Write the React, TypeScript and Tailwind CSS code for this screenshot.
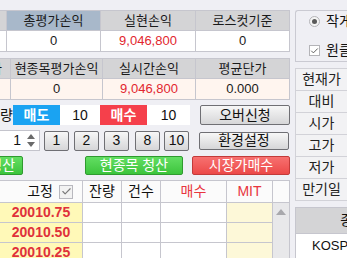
import { Check } from "lucide-react";

const FONT = { fontFamily: "'Liberation Sans', 'Noto Sans CJK KR', sans-serif" };

const LINE = "border-[#c6c6ce]";

function HeadCell({ children, blue = false }: { children?: React.ReactNode; blue?: boolean }) {
  return (
    <div
      className={`flex items-center justify-center overflow-hidden whitespace-nowrap border-r border-b ${LINE} ${
        blue ? "bg-[#a8b8ca]" : "bg-[#d4d4d6]"
      } text-[#1a1a1a]`}
    >
      {children}
    </div>
  );
}

function ValueCell({ children, red = false, bg }: { children?: React.ReactNode; red?: boolean; bg: string }) {
  return (
    <div
      className={`flex items-center justify-center border-r border-b ${LINE} ${bg} ${
        red ? "text-[#e2262e]" : "text-[#1a1a1a]"
      }`}
    >
      {children}
    </div>
  );
}

function GrayButton({ children, className = "" }: { children: React.ReactNode; className?: string }) {
  return (
    <button
      className={`flex items-center justify-center rounded-[2px] border border-[#6f6f74] bg-gradient-to-b from-[#f7f7f7] to-[#d6d6d8] text-[14px] text-[#111] ${className}`}
    >
      {children}
    </button>
  );
}

function Summary() {
  return (
    <div className="flex flex-col">
      <div className={`grid grid-cols-[7px_94px_95px_94px] grid-rows-[20px_21px] border-t ${LINE}`}>
        <HeadCell />
        <HeadCell blue>총평가손익</HeadCell>
        <HeadCell>실현손익</HeadCell>
        <HeadCell>로스컷기준</HeadCell>
        <ValueCell bg="bg-white" />
        <ValueCell bg="bg-white">0</ValueCell>
        <ValueCell bg="bg-white" red>
          9,046,800
        </ValueCell>
        <ValueCell bg="bg-white">0</ValueCell>
      </div>
      <div className={`mt-[6px] grid grid-cols-[11px_92px_93px_94px] grid-rows-[20px_21px] border-t ${LINE}`}>
        <div className={`flex items-center justify-end overflow-hidden whitespace-nowrap border-r border-b ${LINE} bg-[#d4d4d6] pr-[8px]`}>
          <span className="shrink-0">평가</span>
        </div>
        <HeadCell>현종목평가손익</HeadCell>
        <HeadCell>실시간손익</HeadCell>
        <HeadCell>평균단가</HeadCell>
        <ValueCell bg="bg-[#fff5ef]" />
        <ValueCell bg="bg-[#fff5ef]">0</ValueCell>
        <ValueCell bg="bg-[#fff5ef]" red>
          9,046,800
        </ValueCell>
        <ValueCell bg="bg-[#fff5ef]">0.000</ValueCell>
      </div>
    </div>
  );
}

function OrderRow() {
  return (
    <div className="mt-[5px] flex h-[20px] items-stretch text-[14px]">
      <div className="flex w-[13px] items-center justify-end overflow-hidden whitespace-nowrap">
        <span className="shrink-0">수량</span>
      </div>
      <div className="flex w-[47px] items-center justify-center bg-[#1aa3f2] font-bold text-white">매도</div>
      <div className="flex w-[40px] items-center justify-center bg-white text-[#111]">10</div>
      <div className="flex w-[47px] items-center justify-center bg-[#f5404b] font-bold text-white">매수</div>
      <div className="flex w-[43px] items-center justify-center bg-white text-[#111]">10</div>
      <GrayButton className="ml-[10px] w-[90px]">오버신청</GrayButton>
    </div>
  );
}

function QtyRow() {
  const btns = [
    { v: "1", ml: "ml-[4px]" },
    { v: "2", ml: "ml-[5px]" },
    { v: "3", ml: "ml-[5px]" },
    { v: "8", ml: "ml-[6px]" },
    { v: "10", ml: "ml-[4px]" },
  ];
  return (
    <div className="mt-[5px] flex h-[21px] items-center">
      <div className="flex h-[21px] w-[40px] items-center justify-end border-y border-r border-[#c4c4cc] bg-white pr-[4px] text-[14px]">
        <span className="mr-[6px]">1</span>
        <div className="flex flex-col items-center gap-[3px]">
          <svg width="8" height="5" viewBox="0 0 8 5">
            <path d="M0 5 L4 0 L8 5 Z" fill="#6a6a6a" />
          </svg>
          <svg width="8" height="5" viewBox="0 0 8 5">
            <path d="M0 0 L4 5 L8 0 Z" fill="#6a6a6a" />
          </svg>
        </div>
      </div>
      {btns.map((b) => (
        <GrayButton key={b.v} className={`${b.ml} h-[20px] w-[25px]`}>
          {b.v}
        </GrayButton>
      ))}
      <GrayButton className="ml-[10px] h-[18px] w-[90px]">환경설정</GrayButton>
    </div>
  );
}

function ActionRow() {
  return (
    <div className="mt-[5px] flex h-[19px] items-stretch text-[14px] text-white">
      <div className="flex w-[23px] justify-end overflow-hidden">
        <button className="flex w-[97px] shrink-0 items-center justify-center whitespace-nowrap rounded-[2px] border border-[#2f9a2f] bg-gradient-to-b from-[#62de62] to-[#3cc43c]">
          전체종목 청산
        </button>
      </div>
      <button className="ml-[62px] flex w-[98px] items-center justify-center rounded-[2px] border border-[#2f9a2f] bg-gradient-to-b from-[#62de62] to-[#3cc43c]">
        현종목 청산
      </button>
      <button className="ml-[9px] flex w-[98px] items-center justify-center rounded-[2px] border border-[#c23a3a] bg-gradient-to-b from-[#f77070] to-[#ec4848]">
        시장가매수
      </button>
    </div>
  );
}

function PriceGrid() {
  const rows = ["20010.75", "20010.50", "20010.25"];
  const cell = `border-r border-b ${LINE}`;
  return (
    <div className={`mt-[5px] grid grid-cols-[83px_39px_39px_66px_46px_17px] grid-rows-[22px_20px_20px_20px] border-t ${LINE} text-[14px]`}>
      <div className={`${cell} flex items-center justify-end gap-[6px] bg-[#fbfbfb] pr-[9px]`}>
        <span>고정</span>
        <span className="flex h-[14px] w-[14px] items-center justify-center border border-[#b8b8be] bg-[#f2f2f2]">
          <Check size={11} strokeWidth={2.5} color="#7a7a7a" />
        </span>
      </div>
      <div className={`${cell} flex items-center justify-center bg-[#fbfbfb]`}>잔량</div>
      <div className={`${cell} flex items-center justify-center bg-[#fbfbfb]`}>건수</div>
      <div className={`${cell} flex items-center justify-center bg-[#fbfbfb] text-[#e8353d]`}>매수</div>
      <div className={`${cell} flex items-center justify-center bg-[#fbfbfb] text-[#e8353d]`}>MIT</div>
      <div className={`${cell} bg-[#fbfbfb]`} />
      {rows.map((p, i) => (
        <div key={p} className="contents">
          <div className={`${cell} flex items-center justify-center bg-[#fff9b8] font-bold text-[#e0313a]`}>{p}</div>
          <div className={`${cell} bg-white`} />
          <div className={`${cell} bg-white`} />
          <div className={`${cell} bg-white`} />
          <div className={`${cell} bg-[#fdf8d8]`} />
          <div className="flex items-start justify-center border-r border-[#c6c6ce] bg-[#e8e8ea] pt-[6px]">
            {i === 0 && (
              <svg width="10" height="6" viewBox="0 0 10 6">
                <path d="M0 6 L5 0 L10 6 Z" fill="#a8a8ac" />
              </svg>
            )}
          </div>
        </div>
      ))}
    </div>
  );
}

function SidePanel() {
  const labels = ["현재가", "대비", "시가", "고가", "저가", "만기일"];
  return (
    <div className="flex w-[60px] shrink-0 flex-col pt-[10px] text-[14px]">
      <div className="flex h-[57px] flex-col justify-center gap-[8px] rounded-tl-[3px] border-y border-l border-[#cacad2] pl-[13px] whitespace-nowrap">
        <div className="flex items-center gap-[6px]">
          <span className="flex h-[11px] w-[11px] items-center justify-center rounded-full border border-[#b4b4b8] bg-[#f4f4f4]">
            <span className="h-[5px] w-[5px] rounded-full bg-[#5a5a5a]" />
          </span>
          <span>작게</span>
        </div>
        <div className="flex items-center gap-[6px]">
          <span className="flex h-[11px] w-[11px] items-center justify-center border border-[#b4b4b8] bg-white">
            <Check size={10} strokeWidth={2.5} color="#555" />
          </span>
          <span>원클릭</span>
        </div>
      </div>
      <div className="mt-[6px] flex flex-col border-t border-l border-[#d2d2d8]">
        {labels.map((l) => (
          <div key={l} className="flex h-[22px] w-[52px] items-center justify-center border-r border-b border-[#d2d2d8] bg-[#f2f2f4] text-[#222]">
            {l}
          </div>
        ))}
      </div>
      <div className="mt-[6px] flex w-[80px] flex-col border-t border-l border-[#c6c6ce]">
        <div className="flex h-[26px] items-center justify-end overflow-hidden whitespace-nowrap border-b border-[#c6c6ce] bg-[#d4d4d6] pr-[9px]">
          <span>종목</span>
        </div>
        <div className="flex h-[24px] items-center whitespace-nowrap bg-white pl-[16px] text-[13px]">KOSPI200</div>
      </div>
    </div>
  );
}

export default function App() {
  return (
    <div style={FONT} className="flex h-[258px] w-[347px] gap-[5px] overflow-hidden bg-[#efeff4] text-[13px] text-[#111]">
      <div className="flex w-[290px] shrink-0 flex-col pt-[10px]">
        <Summary />
        <OrderRow />
        <QtyRow />
        <ActionRow />
        <PriceGrid />
      </div>
      <SidePanel />
    </div>
  );
}
